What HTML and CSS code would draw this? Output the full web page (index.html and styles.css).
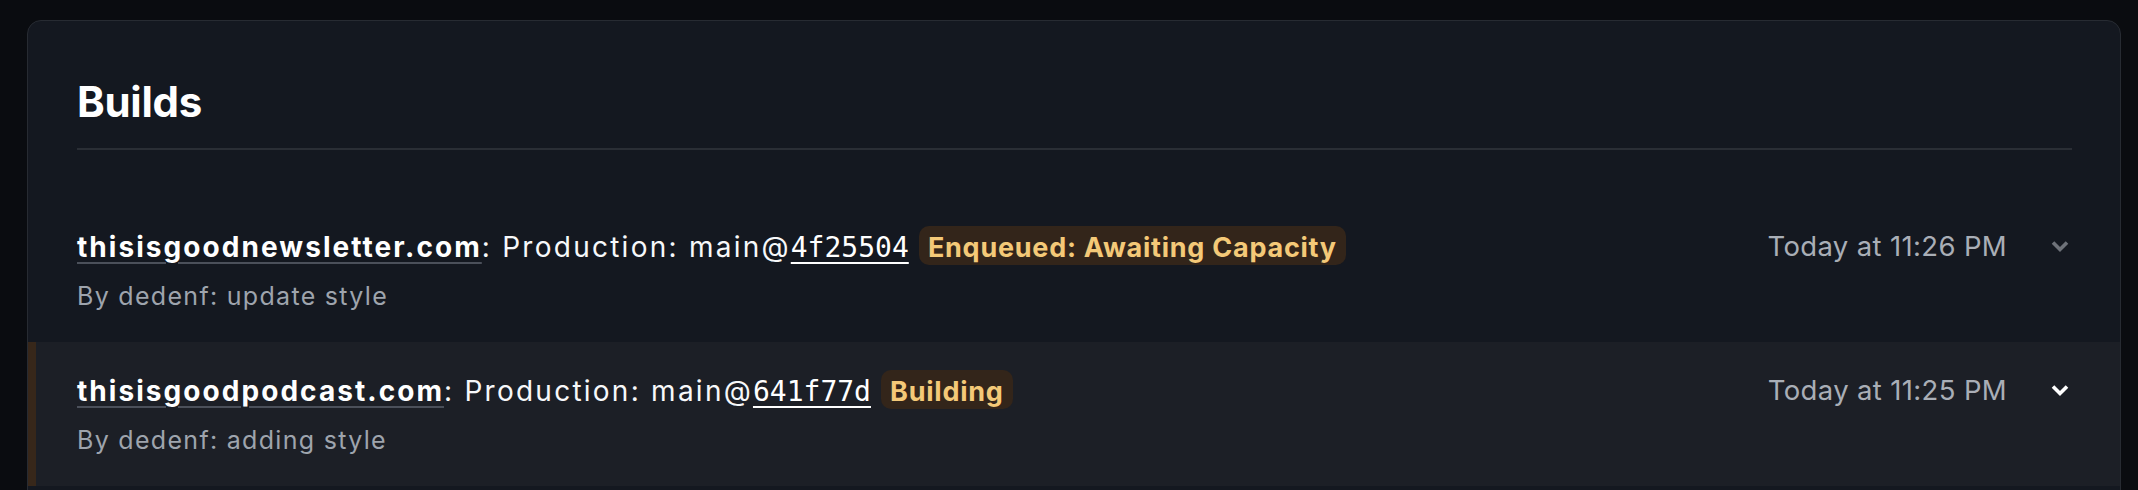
FILE: index.html
```html
<!DOCTYPE html>
<html lang="en">
<head>
<meta charset="utf-8">
<title>Builds</title>
<link rel="stylesheet" href="styles.css">
</head>
<body>
<section class="card">
  <header class="card-header">
    <h1 class="card-title">Builds</h1>
  </header>
  <ul class="builds">
    <li class="build">
      <div class="build-main">
        <div class="build-line"><a class="site" href="#">thisisgoodnewsletter.com</a>: Production: main@<a class="hash" href="#">4f25504</a> <span class="badge">Enqueued: Awaiting Capacity</span></div>
        <div class="build-sub">By dedenf: update style</div>
      </div>
      <div class="build-meta">
        <span class="time">Today at 11:26 PM</span>
        <svg class="chev" viewBox="0 0 18 13" width="18" height="13" aria-hidden="true"><path d="M2 2.5 L9 9.5 L16 2.5" fill="none" stroke="currentColor" stroke-width="3.6" stroke-linejoin="miter"/></svg>
      </div>
    </li>
    <li class="build build-active">
      <div class="build-main">
        <div class="build-line"><a class="site" href="#">thisisgoodpodcast.com</a>: Production: main@<a class="hash" href="#">641f77d</a> <span class="badge">Building</span></div>
        <div class="build-sub">By dedenf: adding style</div>
      </div>
      <div class="build-meta">
        <span class="time">Today at 11:25 PM</span>
        <svg class="chev" viewBox="0 0 18 13" width="18" height="13" aria-hidden="true"><path d="M2 2.5 L9 9.5 L16 2.5" fill="none" stroke="currentColor" stroke-width="3.6" stroke-linejoin="miter"/></svg>
      </div>
    </li>
  </ul>
</section>
</body>
</html>
```
FILE: styles.css
```css
* { box-sizing: border-box; }
html, body { margin: 0; padding: 0; }
body {
  background: #0a0c10;
  font-family: Inter, "Noto Sans", "Liberation Sans", sans-serif;
  color: #f3f4f6;
  padding: 20px 17px 0 27px;
  height: 490px;
  overflow: hidden;
}
.card {
  background: #141820;
  border: 1px solid #272b32;
  border-radius: 14px;
  height: 520px;
}
.card-header {
  margin: 0 48px 0 49px;
  padding: 55px 0 20px;
  border-bottom: 2px solid #2a2e35;
}
.card-title {
  margin: 0;
  font-size: 42px;
  line-height: 52px;
  font-weight: 700;
  letter-spacing: -0.3px;
  color: #ffffff;
}
.builds {
  list-style: none;
  margin: 48px 0 0;
  padding: 0;
}
.build {
  display: flex;
  align-items: flex-start;
  height: 144px;
  padding: 28px 51px 0 41px;
  border-left: 8px solid transparent;
}
.build-active {
  background: #1c1f26;
  border-left-color: #37271a;
}
.build-main { flex: 1; min-width: 0; }
.build-line {
  font-size: 28px;
  line-height: 40px;
  letter-spacing: 2.25px;
  white-space: nowrap;
  color: #f7f8fa;
}
.site {
  color: #ffffff;
  font-weight: 650;
  letter-spacing: 2.05px;
  text-decoration: underline;
  text-decoration-color: #4b505a;
  text-decoration-thickness: 2px;
  text-underline-offset: 5px;
}
.hash {
  color: #ffffff;
  font-family: "DejaVu Sans Mono", "Liberation Mono", monospace;
  font-size: 28px;
  letter-spacing: 0;
  text-decoration: underline;
  text-decoration-color: #ffffff;
  text-decoration-thickness: 2px;
  text-underline-offset: 5px;
}
.badge {
  display: inline-block;
  padding: 4px 9px 0;
  line-height: 35px;
  border-radius: 10px;
  background: #33251a;
  color: #f4c978;
  font-weight: 700;
  font-size: 27px;
  letter-spacing: 0.75px;
}
.build-sub {
  margin-top: 8px;
  font-size: 25px;
  line-height: 40px;
  letter-spacing: 1.3px;
  color: #9ea4ad;
}
.build-meta {
  display: flex;
  align-items: center;
  gap: 44px;
  height: 40px;
}
.time {
  font-size: 27.5px;
  letter-spacing: 0.35px;
  color: #a9aeb6;
  white-space: nowrap;
}
.chev { display: block; color: #6e7279; }
.build-active .chev { color: #ffffff; }
```
